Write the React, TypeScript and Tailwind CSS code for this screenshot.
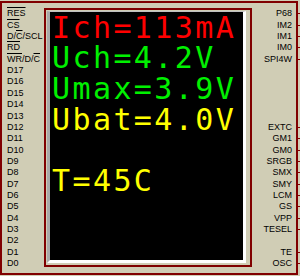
import React from "react";

const O = ({ children }: { children: React.ReactNode }) => (
  <span className="overline">{children}</span>
);

const LEFT: React.ReactNode[] = [
  <O>RES</O>,
  <O>CS</O>,
  <>
    D/<O>C</O>/SCL
  </>,
  <O>RD</O>,
  <>
    <O>WR</O>/D/<O>C</O>
  </>,
  "D17",
  "D16",
  "D15",
  "D14",
  "D13",
  "D12",
  "D11",
  "D10",
  "D9",
  "D8",
  "D7",
  "D6",
  "D5",
  "D4",
  "D3",
  "D2",
  "D1",
  "D0",
];

const RIGHT: string[] = [
  "P68",
  "IM2",
  "IM1",
  "IM0",
  "SPI4W",
  "",
  "",
  "",
  "",
  "",
  "EXTC",
  "GM1",
  "GM0",
  "SRGB",
  "SMX",
  "SMY",
  "LCM",
  "GS",
  "VPP",
  "TESEL",
  "",
  "TE",
  "OSC",
];

const LINES: { text: string; color: string }[] = [
  { text: "Ich=113mA", color: "text-[#ff0000]" },
  { text: "Uch=4.2V", color: "text-[#00f000]" },
  { text: "Umax=3.9V", color: "text-[#00f000]" },
  { text: "Ubat=4.0V", color: "text-[#ffff00]" },
  { text: " ", color: "text-[#ffff00]" },
  { text: "T=45C", color: "text-[#ffff00]" },
];

export default function App() {
  return (
    <div className="w-[300px] h-[276px] bg-[#d0cdb5] pt-[1px] font-['Liberation_Sans',Arial,sans-serif]">
      <div className="w-[298px] h-[274px] border-2 border-[#800000] flex">
        <div className="w-[42px] shrink-0 pt-[5.3px] pl-[5px] flex flex-col text-[9px] text-black">
          {LEFT.map((l, i) => (
            <div key={i} className="h-[11.36px] leading-[11.36px] whitespace-nowrap">
              {l}
            </div>
          ))}
        </div>
        <div className="mt-[5px] w-[208px] h-[259px] shrink-0 border-2 border-[#800000] pl-[1px] pt-[1px] pr-[4px] pb-[2px]">
          <div className="w-full h-full border-l-[3px] border-t border-r-[3px] border-b-[3px] border-l-[#a8a8a8] border-t-[#c0c0c0] border-r-white border-b-white bg-black overflow-hidden">
            <div className="pt-[0.5px] pl-[2px] font-['DejaVu_Sans_Mono',monospace] text-[30px] tracking-[2.4px] leading-[30.8px] whitespace-pre">
              {LINES.map((ln, i) => (
                <div key={i} className={ln.color}>
                  {ln.text}
                </div>
              ))}
            </div>
          </div>
        </div>
        <div className="w-[44px] shrink-0 pt-[5.3px] flex flex-col text-[9px] text-black">
          {RIGHT.map((r, i) => (
            <div
              key={i}
              className="relative h-[11.36px] leading-[11.36px] pr-[4px] text-right whitespace-nowrap"
            >
              {r}
              {r && (
                <span className="absolute right-[-4px] top-[5px] w-[2px] h-[1px] bg-[#800000]" />
              )}
            </div>
          ))}
        </div>
      </div>
    </div>
  );
}
